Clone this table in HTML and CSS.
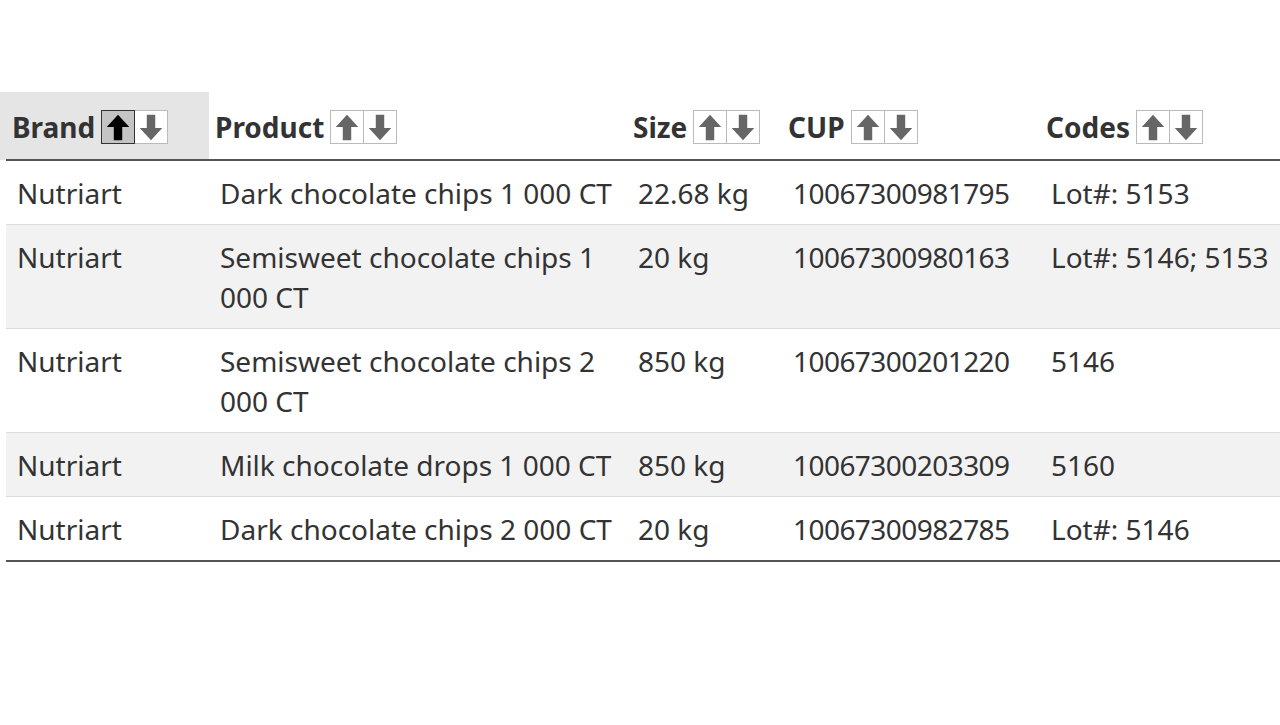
FILE: index.html
```html
<!DOCTYPE html>
<html>
<head>
<meta charset="utf-8">
<link rel="stylesheet" href="styles.css">
</head>
<body>
<div class="wrap">
<table class="grid">
  <colgroup>
    <col class="c1"><col class="c2"><col class="c3"><col class="c4"><col class="c5">
  </colgroup>
  <thead>
    <tr>
      <th class="sorted"><span class="hd">Brand<span class="sort"><span class="btn active"><svg viewBox="0 0 32 32"><path d="M16 3 L28 16 L20.5 16 L20.5 30 L11.5 30 L11.5 16 L4 16 Z"/></svg></span><span class="btn"><svg viewBox="0 0 32 32"><path d="M16 30 L28 17 L20.5 17 L20.5 3 L11.5 3 L11.5 17 L4 17 Z"/></svg></span></span></span></th>
      <th><span class="hd">Product<span class="sort"><span class="btn"><svg viewBox="0 0 32 32"><path d="M16 3 L28 16 L20.5 16 L20.5 30 L11.5 30 L11.5 16 L4 16 Z"/></svg></span><span class="btn"><svg viewBox="0 0 32 32"><path d="M16 30 L28 17 L20.5 17 L20.5 3 L11.5 3 L11.5 17 L4 17 Z"/></svg></span></span></span></th>
      <th><span class="hd">Size<span class="sort"><span class="btn"><svg viewBox="0 0 32 32"><path d="M16 3 L28 16 L20.5 16 L20.5 30 L11.5 30 L11.5 16 L4 16 Z"/></svg></span><span class="btn"><svg viewBox="0 0 32 32"><path d="M16 30 L28 17 L20.5 17 L20.5 3 L11.5 3 L11.5 17 L4 17 Z"/></svg></span></span></span></th>
      <th><span class="hd">CUP<span class="sort"><span class="btn"><svg viewBox="0 0 32 32"><path d="M16 3 L28 16 L20.5 16 L20.5 30 L11.5 30 L11.5 16 L4 16 Z"/></svg></span><span class="btn"><svg viewBox="0 0 32 32"><path d="M16 30 L28 17 L20.5 17 L20.5 3 L11.5 3 L11.5 17 L4 17 Z"/></svg></span></span></span></th>
      <th><span class="hd">Codes<span class="sort"><span class="btn"><svg viewBox="0 0 32 32"><path d="M16 3 L28 16 L20.5 16 L20.5 30 L11.5 30 L11.5 16 L4 16 Z"/></svg></span><span class="btn"><svg viewBox="0 0 32 32"><path d="M16 30 L28 17 L20.5 17 L20.5 3 L11.5 3 L11.5 17 L4 17 Z"/></svg></span></span></span></th>
    </tr>
  </thead>
  <tbody>
    <tr><td>Nutriart</td><td>Dark chocolate chips 1 000 CT</td><td>22.68 kg</td><td class="num">10067300981795</td><td>Lot#: 5153</td></tr>
    <tr class="alt"><td>Nutriart</td><td>Semisweet chocolate chips 1 000 CT</td><td>20 kg</td><td class="num">10067300980163</td><td>Lot#: 5146; 5153</td></tr>
    <tr><td>Nutriart</td><td>Semisweet chocolate chips 2 000 CT</td><td>850 kg</td><td class="num">10067300201220</td><td>5146</td></tr>
    <tr class="alt"><td>Nutriart</td><td>Milk chocolate drops 1 000 CT</td><td>850 kg</td><td class="num">10067300203309</td><td>5160</td></tr>
    <tr class="last"><td>Nutriart</td><td>Dark chocolate chips 2 000 CT</td><td>20 kg</td><td class="num">10067300982785</td><td>Lot#: 5146</td></tr>
  </tbody>
</table>
</div>
</body>
</html>
```

FILE: styles.css
```css
html, body {
  margin: 0;
  padding: 0;
  background: #fff;
}
body {
  font-family: "Noto Sans", "Open Sans", sans-serif;
  color: #333;
}
.wrap {
  padding: 92px 0 0 6px;
}
.grid {
  width: 1274px;
  table-layout: fixed;
  border-collapse: collapse;
  font-size: 28px;
}
.c1 { width: 203px; }
.c2 { width: 418px; }
.c3 { width: 155px; }
.c4 { width: 258px; }
.c5 { width: 240px; }
th {
  text-align: left;
  font-weight: bold;
  padding: 18px 6px 15px 6px;
  border-bottom: 2px solid #555;
  white-space: nowrap;
  line-height: 34px;
}
th.sorted {
  background: #e6e5e6;
  box-shadow: -6px 0 0 #e6e5e6;
}
.hd {
  display: inline-flex;
  align-items: center;
  gap: 6px;
}
.sort {
  display: inline-flex;
}
.btn {
  width: 32px;
  height: 32px;
  border: 1px solid #bbb;
  background: #fff;
  display: inline-flex;
  align-items: center;
  justify-content: center;
}
.btn + .btn {
  border-left: 0;
}
.btn svg {
  width: 30px;
  height: 30px;
  fill: #666;
}
.btn.active {
  background: #c4c4c4;
  border-color: #333;
}
.btn.active svg {
  fill: #000;
}
td {
  padding: 12px 11px 11px 11px;
  line-height: 40px;
  vertical-align: top;
  border-bottom: 1px solid #ddd;
}
td.num {
  letter-spacing: -0.55px;
}
tr.alt td {
  background: #f3f2f3;
}
tr.last td {
  border-bottom: 2px solid #555;
}
```
